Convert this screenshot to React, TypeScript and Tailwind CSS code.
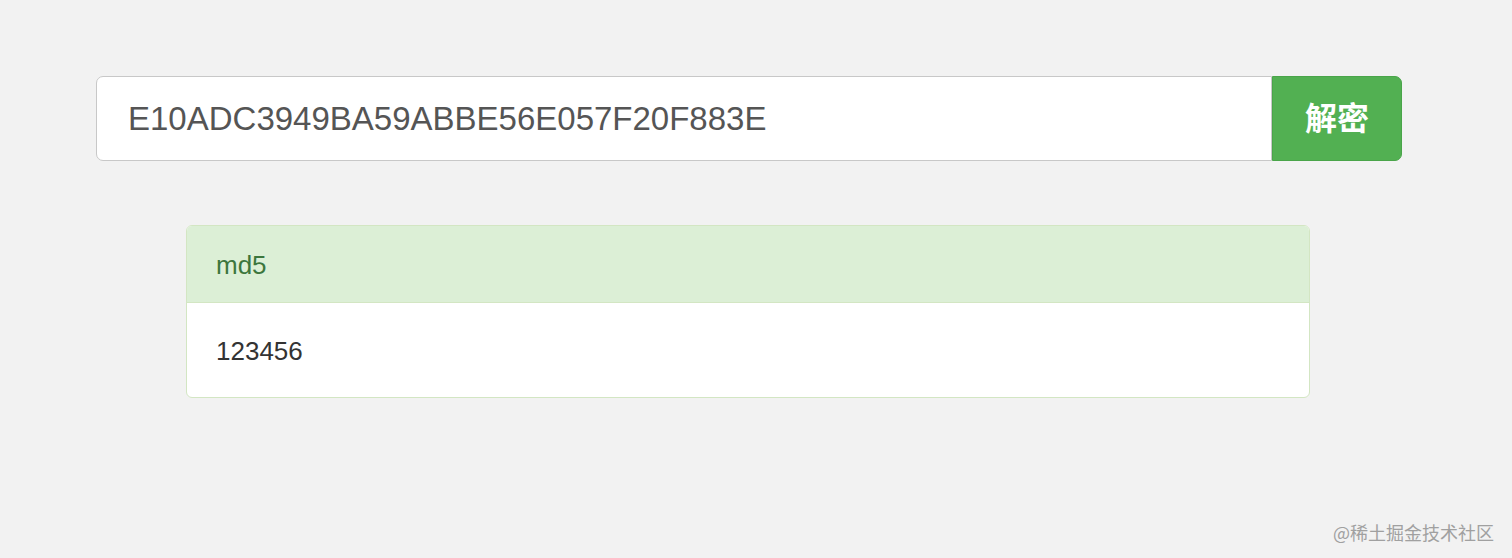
import React from "react";

export default function App() {
  return (
    <div
      className="relative h-[558px] w-full overflow-hidden bg-[#f2f2f2]"
      style={{ fontFamily: '"Liberation Sans", Arial, "Noto Sans CJK SC", sans-serif' }}
    >
      <div className="flex flex-col pt-[76px]">
        <div className="ml-[96px] flex h-[85px] w-[1306px]">
          <div className="flex flex-1 items-center rounded-l-[7px] border border-[#c8c8c8] bg-white pl-[31px] text-[33px] text-[#555555]">
            E10ADC3949BA59ABBE56E057F20F883E
          </div>
          <button className="flex w-[130px] items-center justify-center rounded-r-[7px] border border-[#4aa54a] bg-[#52b052] text-[32px] font-bold text-white">
            解密
          </button>
        </div>

        <div className="ml-[186px] mt-[64px] w-[1124px] overflow-hidden rounded-[6px] border border-[#d3e6c3] bg-white">
          <div className="flex h-[77px] items-center border-b border-[#d3e6c3] bg-[#dcefd6] pl-[29px] pt-[3px] text-[26px] text-[#3c763d]">
            md5
          </div>
          <div className="flex h-[94px] items-center pl-[29px] pt-[3px] text-[26px] text-[#333333]">
            123456
          </div>
        </div>
      </div>

      <div
        className="absolute right-[18px] top-[519px] text-[18px] text-[#a0a0a0]"
        style={{ fontFamily: '"Noto Sans CJK SC", sans-serif' }}
      >
        @稀土掘金技术社区
      </div>
    </div>
  );
}
